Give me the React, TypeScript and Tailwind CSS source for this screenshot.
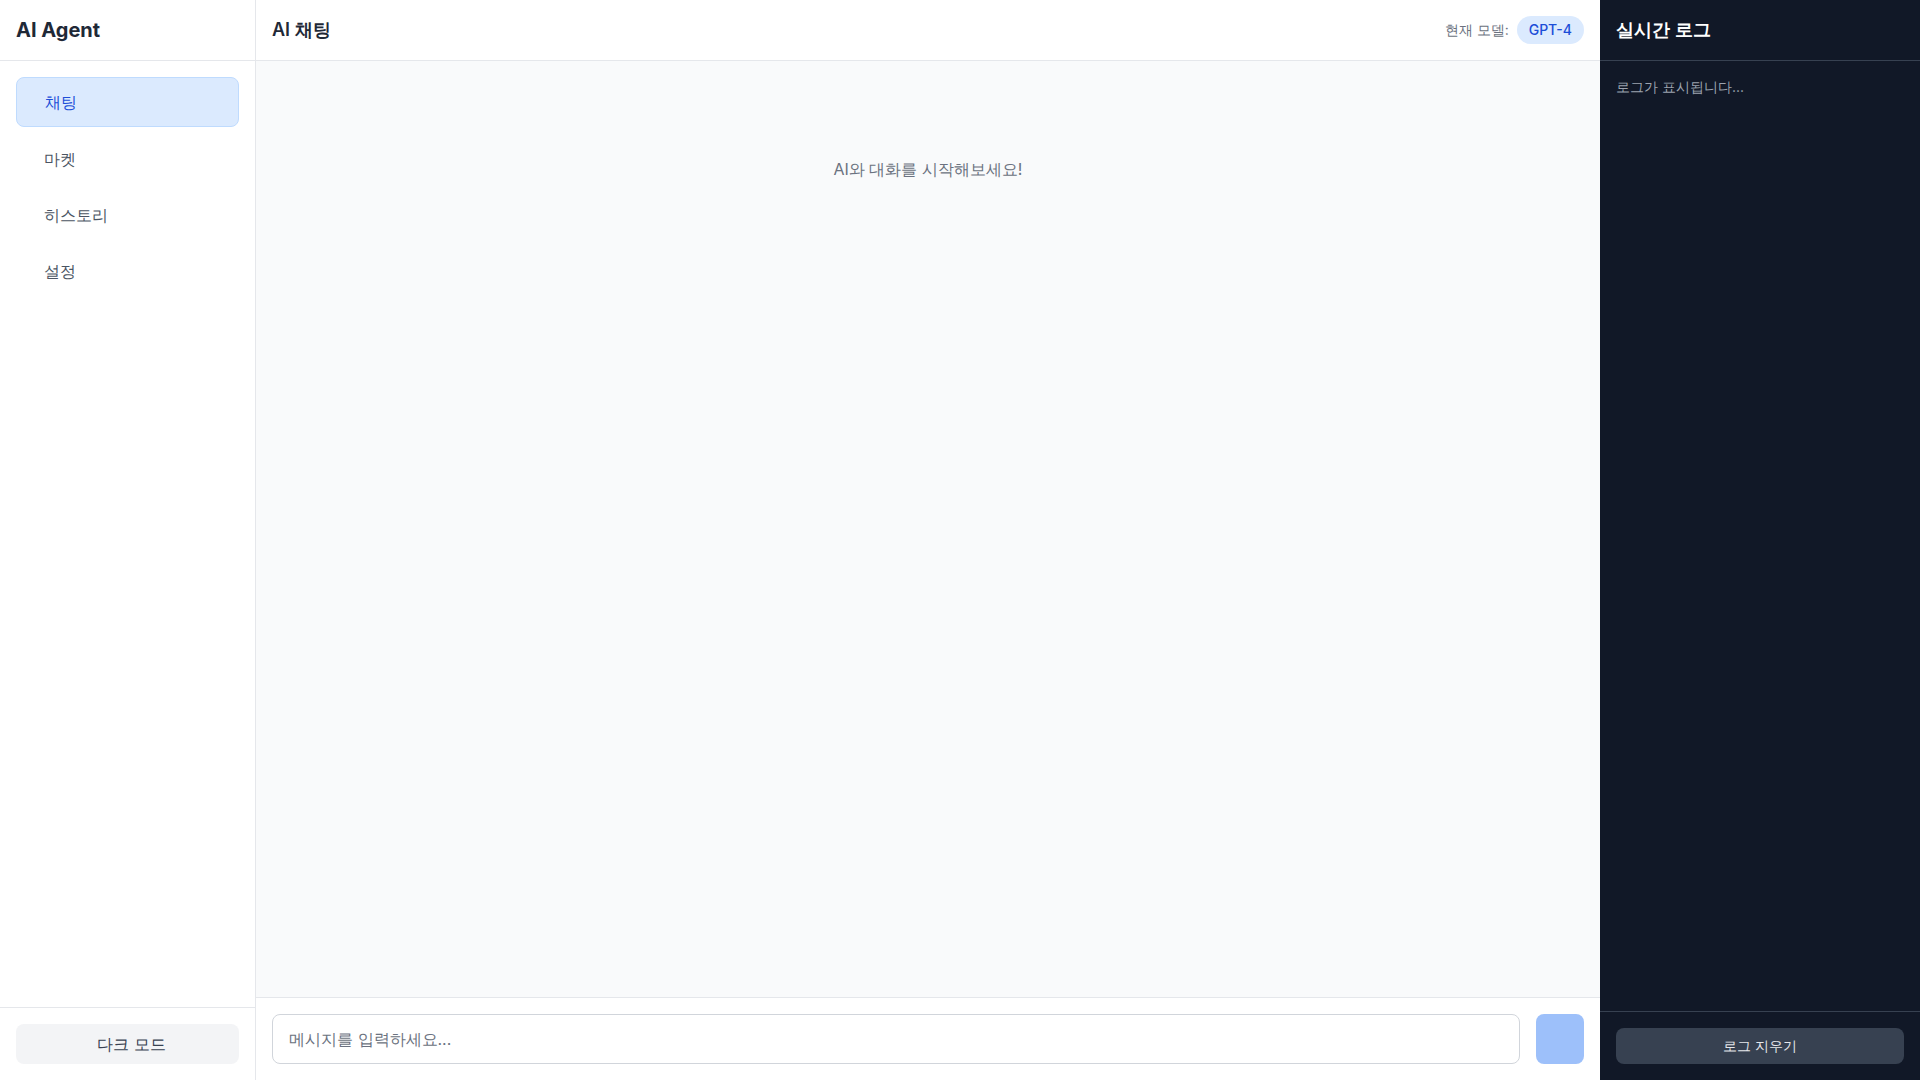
import React from 'react';

const navItems = ['채팅', '마켓', '히스토리', '설정'];

export default function App() {
    return (
        <div className="flex h-screen w-full overflow-hidden bg-white font-['Inter',sans-serif] text-[#111827]">
            {/* sidebar */}
            <aside className="flex w-64 shrink-0 flex-col border-r border-[#e5e7eb] bg-white">
                <div className="flex h-[61px] items-center border-b border-[#e5e7eb] px-4">
                    <h1 className="text-xl font-bold text-[#1f2937]">AI Agent</h1>
                </div>
                <nav className="flex-1 space-y-2 p-4">
                    {navItems.map((item, i) => (
                        <button
                            key={item}
                            className={
                                i === 0
                                    ? 'block w-full rounded-lg border border-[#bfdbfe] bg-[#dbeafe] px-7 py-3 text-left text-base text-[#1d4ed8]'
                                    : 'block w-full rounded-lg px-7 py-3 text-left text-base text-[#4b5563]'
                            }
                        >
                            {item}
                        </button>
                    ))}
                </nav>
                <div className="border-t border-[#e5e7eb] p-4">
                    <button className="flex h-10 w-full items-center justify-center gap-2 rounded-lg bg-[#f3f4f6] text-base text-[#374151]">
                        <span />
                        <span>다크 모드</span>
                    </button>
                </div>
            </aside>

            {/* chat */}
            <main className="flex min-w-0 flex-1 flex-col">
                <header className="flex h-[61px] items-center justify-between border-b border-[#e5e7eb] bg-white px-4">
                    <h2 className="text-lg font-semibold text-[#1f2937]">AI 채팅</h2>
                    <div className="flex items-center gap-2">
                        <span className="text-sm text-[#6b7280]">현재 모델:</span>
                        <span className="rounded-full bg-[#dbeafe] px-3 py-1 text-sm font-medium text-[#1d4ed8]">GPT-4</span>
                    </div>
                </header>
                <div className="flex-1 overflow-y-auto bg-[#f9fafb] p-6">
                    <p className="py-18 text-center text-base text-[#6b7280]">AI와 대화를 시작해보세요!</p>
                </div>
                <div className="flex gap-4 border-t border-[#e5e7eb] bg-white p-4">
                    <input
                        className="h-[50px] flex-1 rounded-lg border border-[#d1d5db] px-4 py-3 text-base outline-none placeholder:text-[#6b7280]"
                        placeholder="메시지를 입력하세요..."
                    />
                    <button disabled className="h-[50px] w-12 rounded-lg bg-[#3b82f6] opacity-50" />
                </div>
            </main>

            {/* log panel */}
            <aside className="flex w-80 shrink-0 flex-col bg-[#111827]">
                <div className="flex h-[61px] items-center border-b border-[#374151] px-4">
                    <h2 className="text-lg font-semibold text-white">실시간 로그</h2>
                </div>
                <div className="flex-1 overflow-y-auto p-4">
                    <p className="text-sm text-[#9ca3af]">로그가 표시됩니다...</p>
                </div>
                <div className="border-t border-[#374151] p-4">
                    <button className="h-9 w-full rounded-lg bg-[#374151] text-sm text-[#e5e7eb]">로그 지우기</button>
                </div>
            </aside>
        </div>
    );
}
